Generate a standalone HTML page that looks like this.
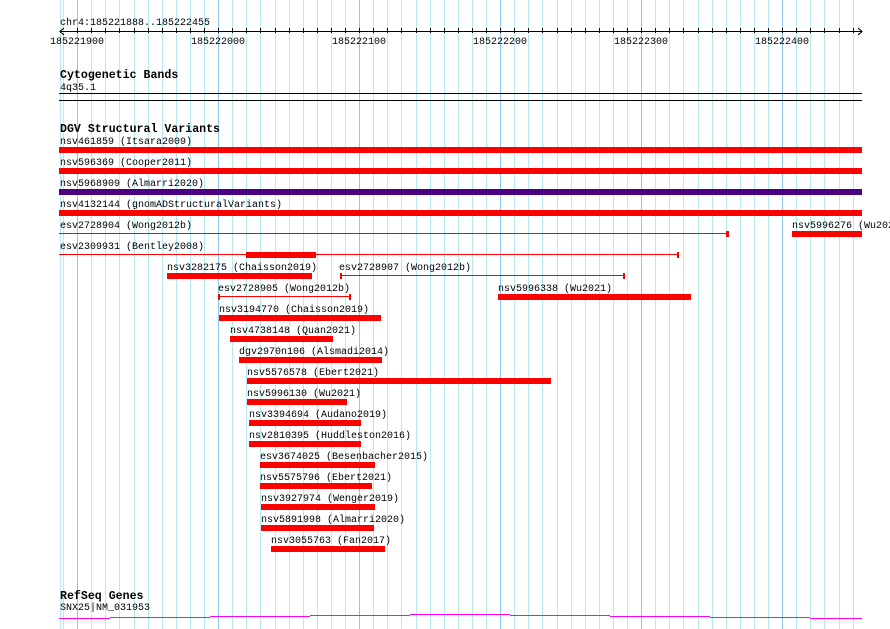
<!DOCTYPE html>
<html><head><meta charset="utf-8"><style>
html,body{margin:0;padding:0;background:#fff;}
svg{display:block;}
text{font-family:"Liberation Mono","DejaVu Sans Mono",monospace;font-size:10px;fill:#000;}
.b{font-weight:bold;font-size:11.6px;}
</style></head><body>
<svg width="890" height="629" viewBox="0 0 890 629" shape-rendering="crispEdges">
<g fill="#b4eaf0">
<rect x="60" y="0" width="1" height="629"/>
<rect x="63" y="0" width="1" height="629"/><rect x="91" y="0" width="1" height="629"/><rect x="105" y="0" width="1" height="629"/><rect x="119" y="0" width="1" height="629"/><rect x="134" y="0" width="1" height="629"/><rect x="148" y="0" width="1" height="629"/><rect x="162" y="0" width="1" height="629"/><rect x="176" y="0" width="1" height="629"/><rect x="190" y="0" width="1" height="629"/><rect x="204" y="0" width="1" height="629"/><rect x="232" y="0" width="1" height="629"/><rect x="246" y="0" width="1" height="629"/><rect x="260" y="0" width="1" height="629"/><rect x="275" y="0" width="1" height="629"/><rect x="289" y="0" width="1" height="629"/><rect x="303" y="0" width="1" height="629"/><rect x="317" y="0" width="1" height="629"/><rect x="331" y="0" width="1" height="629"/><rect x="345" y="0" width="1" height="629"/><rect x="373" y="0" width="1" height="629"/><rect x="387" y="0" width="1" height="629"/><rect x="401" y="0" width="1" height="629"/><rect x="416" y="0" width="1" height="629"/><rect x="430" y="0" width="1" height="629"/><rect x="444" y="0" width="1" height="629"/><rect x="458" y="0" width="1" height="629"/><rect x="472" y="0" width="1" height="629"/><rect x="486" y="0" width="1" height="629"/><rect x="514" y="0" width="1" height="629"/><rect x="528" y="0" width="1" height="629"/><rect x="542" y="0" width="1" height="629"/><rect x="557" y="0" width="1" height="629"/><rect x="571" y="0" width="1" height="629"/><rect x="585" y="0" width="1" height="629"/><rect x="599" y="0" width="1" height="629"/><rect x="613" y="0" width="1" height="629"/><rect x="627" y="0" width="1" height="629"/><rect x="655" y="0" width="1" height="629"/><rect x="669" y="0" width="1" height="629"/><rect x="683" y="0" width="1" height="629"/><rect x="698" y="0" width="1" height="629"/><rect x="712" y="0" width="1" height="629"/><rect x="726" y="0" width="1" height="629"/><rect x="740" y="0" width="1" height="629"/><rect x="754" y="0" width="1" height="629"/><rect x="768" y="0" width="1" height="629"/><rect x="796" y="0" width="1" height="629"/><rect x="810" y="0" width="1" height="629"/><rect x="824" y="0" width="1" height="629"/><rect x="839" y="0" width="1" height="629"/><rect x="853" y="0" width="1" height="629"/>
</g>
<g fill="#8cc6ec">
<rect x="77" y="0" width="1" height="629"/><rect x="218" y="0" width="1" height="629"/><rect x="359" y="0" width="1" height="629"/><rect x="500" y="0" width="1" height="629"/><rect x="641" y="0" width="1" height="629"/><rect x="782" y="0" width="1" height="629"/>
</g>
<!-- ruler -->
<text x="60" y="25">chr4:185221888..185222455</text>
<rect x="60" y="31" width="802" height="1" fill="#000"/>
<path d="M64 28 L60 31.5 L64 35 M858 28 L862 31.5 L858 35" stroke="#000" fill="none" stroke-width="1"/>
<g fill="#000">
<rect x="77" y="28" width="1" height="5"/><rect x="91" y="28" width="1" height="5"/><rect x="105" y="28" width="1" height="5"/><rect x="119" y="28" width="1" height="5"/><rect x="134" y="28" width="1" height="5"/><rect x="148" y="28" width="1" height="5"/><rect x="162" y="28" width="1" height="5"/><rect x="176" y="28" width="1" height="5"/><rect x="190" y="28" width="1" height="5"/><rect x="204" y="28" width="1" height="5"/><rect x="218" y="28" width="1" height="5"/><rect x="232" y="28" width="1" height="5"/><rect x="246" y="28" width="1" height="5"/><rect x="260" y="28" width="1" height="5"/><rect x="275" y="28" width="1" height="5"/><rect x="289" y="28" width="1" height="5"/><rect x="303" y="28" width="1" height="5"/><rect x="317" y="28" width="1" height="5"/><rect x="331" y="28" width="1" height="5"/><rect x="345" y="28" width="1" height="5"/><rect x="359" y="28" width="1" height="5"/><rect x="373" y="28" width="1" height="5"/><rect x="387" y="28" width="1" height="5"/><rect x="401" y="28" width="1" height="5"/><rect x="416" y="28" width="1" height="5"/><rect x="430" y="28" width="1" height="5"/><rect x="444" y="28" width="1" height="5"/><rect x="458" y="28" width="1" height="5"/><rect x="472" y="28" width="1" height="5"/><rect x="486" y="28" width="1" height="5"/><rect x="500" y="28" width="1" height="5"/><rect x="514" y="28" width="1" height="5"/><rect x="528" y="28" width="1" height="5"/><rect x="542" y="28" width="1" height="5"/><rect x="557" y="28" width="1" height="5"/><rect x="571" y="28" width="1" height="5"/><rect x="585" y="28" width="1" height="5"/><rect x="599" y="28" width="1" height="5"/><rect x="613" y="28" width="1" height="5"/><rect x="627" y="28" width="1" height="5"/><rect x="641" y="28" width="1" height="5"/><rect x="655" y="28" width="1" height="5"/><rect x="669" y="28" width="1" height="5"/><rect x="683" y="28" width="1" height="5"/><rect x="698" y="28" width="1" height="5"/><rect x="712" y="28" width="1" height="5"/><rect x="726" y="28" width="1" height="5"/><rect x="740" y="28" width="1" height="5"/><rect x="754" y="28" width="1" height="5"/><rect x="768" y="28" width="1" height="5"/><rect x="782" y="28" width="1" height="5"/><rect x="796" y="28" width="1" height="5"/><rect x="810" y="28" width="1" height="5"/><rect x="824" y="28" width="1" height="5"/><rect x="839" y="28" width="1" height="5"/><rect x="853" y="28" width="1" height="5"/>
</g>
<g text-anchor="middle">
<text x="77" y="44">185221900</text><text x="218" y="44">185222000</text><text x="359" y="44">185222100</text><text x="500" y="44">185222200</text><text x="641" y="44">185222300</text><text x="782" y="44">185222400</text>
</g>
<!-- cytobands -->
<text class="b" x="60" y="78">Cytogenetic Bands</text>
<text x="60" y="90">4q35.1</text>
<rect x="59" y="93" width="803" height="1" fill="#000"/>
<rect x="59" y="100" width="803" height="1" fill="#000"/>
<!-- DGV -->
<text class="b" x="60" y="132">DGV Structural Variants</text>
<g>
<text x="60" y="144">nsv461859 (Itsara2009)</text>
<text x="60" y="165">nsv596369 (Cooper2011)</text>
<text x="60" y="186">nsv5968909 (Almarri2020)</text>
<text x="60" y="207">nsv4132144 (gnomADStructuralVariants)</text>
<text x="60" y="228">esv2728904 (Wong2012b)</text>
<text x="792" y="228">nsv5996276 (Wu2021)</text>
<text x="60" y="249">esv2309931 (Bentley2008)</text>
<text x="167" y="270">nsv3282175 (Chaisson2019)</text>
<text x="339" y="270">esv2728907 (Wong2012b)</text>
<text x="218" y="291">esv2728905 (Wong2012b)</text>
<text x="498" y="291">nsv5996338 (Wu2021)</text>
<text x="219" y="312">nsv3194770 (Chaisson2019)</text>
<text x="230" y="333">nsv4738148 (Quan2021)</text>
<text x="239" y="354">dgv2970n106 (Alsmadi2014)</text>
<text x="247" y="375">nsv5576578 (Ebert2021)</text>
<text x="247" y="396">nsv5996130 (Wu2021)</text>
<text x="249" y="417">nsv3394694 (Audano2019)</text>
<text x="249" y="438">nsv2810395 (Huddleston2016)</text>
<text x="260" y="459">esv3674025 (Besenbacher2015)</text>
<text x="260" y="480">nsv5575796 (Ebert2021)</text>
<text x="261" y="501">nsv3927974 (Wenger2019)</text>
<text x="261" y="522">nsv5891998 (Almarri2020)</text>
<text x="271" y="543">nsv3055763 (Fan2017)</text>
</g>
<g fill="#ff0000">
<rect x="59" y="147" width="803" height="6"/>
<rect x="59" y="168" width="803" height="6"/>
<rect x="59" y="189" width="803" height="6" fill="#4b0082"/>
<rect x="59" y="210" width="803" height="6"/>
<rect x="59" y="233" width="669" height="1"/><rect x="726" y="231" width="3" height="6"/>
<rect x="792" y="231" width="70" height="6"/>
<rect x="59" y="254" width="620" height="1"/><rect x="677" y="252" width="2" height="6"/>
<rect x="246" y="252" width="70" height="6"/>
<rect x="167" y="273" width="145" height="6"/>
<rect x="340" y="275" width="285" height="1"/><rect x="340" y="273" width="2" height="6"/><rect x="623" y="273" width="2" height="6"/>
<rect x="218" y="296" width="133" height="1"/><rect x="218" y="294" width="2" height="6"/><rect x="349" y="294" width="2" height="6"/>
<rect x="498" y="294" width="193" height="6"/>
<rect x="219" y="315" width="162" height="6"/>
<rect x="230" y="336" width="103" height="6"/>
<rect x="239" y="357" width="143" height="6"/>
<rect x="247" y="378" width="304" height="6"/>
<rect x="247" y="399" width="100" height="6"/>
<rect x="249" y="420" width="112" height="6"/>
<rect x="249" y="441" width="112" height="6"/>
<rect x="260" y="462" width="115" height="6"/>
<rect x="260" y="483" width="112" height="6"/>
<rect x="261" y="504" width="114" height="6"/>
<rect x="261" y="525" width="113" height="6"/>
<rect x="271" y="546" width="114" height="6"/>
</g>
<!-- RefSeq -->
<text class="b" x="60" y="599">RefSeq Genes</text>
<text x="60" y="610">SNX25|NM_031953</text>
<g fill="#ff00ff">
<rect x="59" y="618" width="51" height="1"/>
<rect x="110" y="617" width="100" height="1"/>
<rect x="210" y="616" width="100" height="1"/>
<rect x="310" y="615" width="100" height="1"/>
<rect x="410" y="614" width="100" height="1"/>
<rect x="510" y="615" width="100" height="1"/>
<rect x="610" y="616" width="100" height="1"/>
<rect x="710" y="617" width="100" height="1"/>
<rect x="810" y="618" width="52" height="1"/>
</g>
</svg>
</body></html>
